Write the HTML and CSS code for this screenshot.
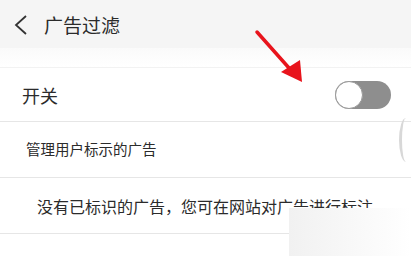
FILE: index.html
```html
<!DOCTYPE html>
<html lang="zh-CN">
<head>
  <meta charset="UTF-8" />
  <meta name="viewport" content="width=device-width, initial-scale=1.0" />
  <title>广告过滤</title>
  <link rel="stylesheet" href="styles.css">
</head>
<body>

  <!-- header -->
  <div class="header">
    <svg class="back" width="16" height="22" viewBox="0 0 16 22">
      <polyline points="13,2 3,11 13,20" fill="none" stroke="#333" stroke-width="1.8" />
    </svg>
    <span class="title">广告过滤</span>
  </div>
  <div class="gap"></div>

  <!-- switch row -->
  <div class="row switch-row">
    <span>开关</span>
    <div class="toggle"><div class="knob"></div></div>
  </div>

  <div class="row manage-row">管理用户标示的广告</div>
  <div class="row empty-row">没有已标识的广告，您可在网站对广告进行标注</div>

  <!-- overlays -->
  <svg class="arrow" width="60" height="60" viewBox="0 0 60 60">
    <line x1="4" y1="4" x2="36" y2="40" stroke="#e8141c" stroke-width="3.5" stroke-linecap="round" />
    <polygon points="28,44 47,32 49,54" fill="#e8141c" />
  </svg>
  <div class="scroll-arc"></div>
  <div class="watermark"></div>

</body>
</html>
```

FILE: styles.css
```css
* {
  margin: 0;
  padding: 0;
  box-sizing: border-box;
}

body {
  width: 411px;
  height: 256px;
  background: #fff;
  font-family: "Noto Sans CJK SC", "Noto Sans", sans-serif;
  color: #2b2b2b;
  position: relative;
  overflow: hidden;
}

.header {
  height: 48px;
  background: #f5f5f5;
  display: flex;
  align-items: center;
  padding-left: 13px;
}

.back {
  margin-right: 15px;
  margin-top: 1px;
}

.title {
  font-size: 19px;
}

.gap {
  height: 20px;
  background: linear-gradient(#fafafa, #fff);
  border-bottom: 1px solid #f2f2f2;
}

.row {
  display: flex;
  align-items: center;
  border-bottom: 1px solid #e6e6e6;
}

.switch-row {
  height: 54px;
  padding: 0 20px 0 22px;
  justify-content: space-between;
  font-size: 18px;
}

.toggle {
  width: 56px;
  height: 28px;
  background: #8e8e8e;
  border-radius: 14px;
  position: relative;
}

.knob {
  position: absolute;
  left: 0;
  top: 0;
  width: 28px;
  height: 28px;
  border-radius: 50%;
  background: #fff;
  border: 1px solid #9a9a9a;
}

.manage-row {
  height: 56px;
  padding-left: 26px;
  font-size: 14.5px;
  padding-bottom: 2px;
}

.empty-row {
  height: 56px;
  padding-left: 37px;
  font-size: 16px;
}

.arrow {
  position: absolute;
  left: 253px;
  top: 28px;
}

.scroll-arc {
  position: absolute;
  left: 399px;
  top: 118px;
  width: 14px;
  height: 44px;
  border-left: 3px solid #d8d8d8;
  border-radius: 50%;
}

.watermark {
  position: absolute;
  left: 289px;
  top: 208px;
  width: 122px;
  height: 48px;
  background: linear-gradient(90deg, #f1f1f1, #f8f8f8 50%, #fff);
}
```
